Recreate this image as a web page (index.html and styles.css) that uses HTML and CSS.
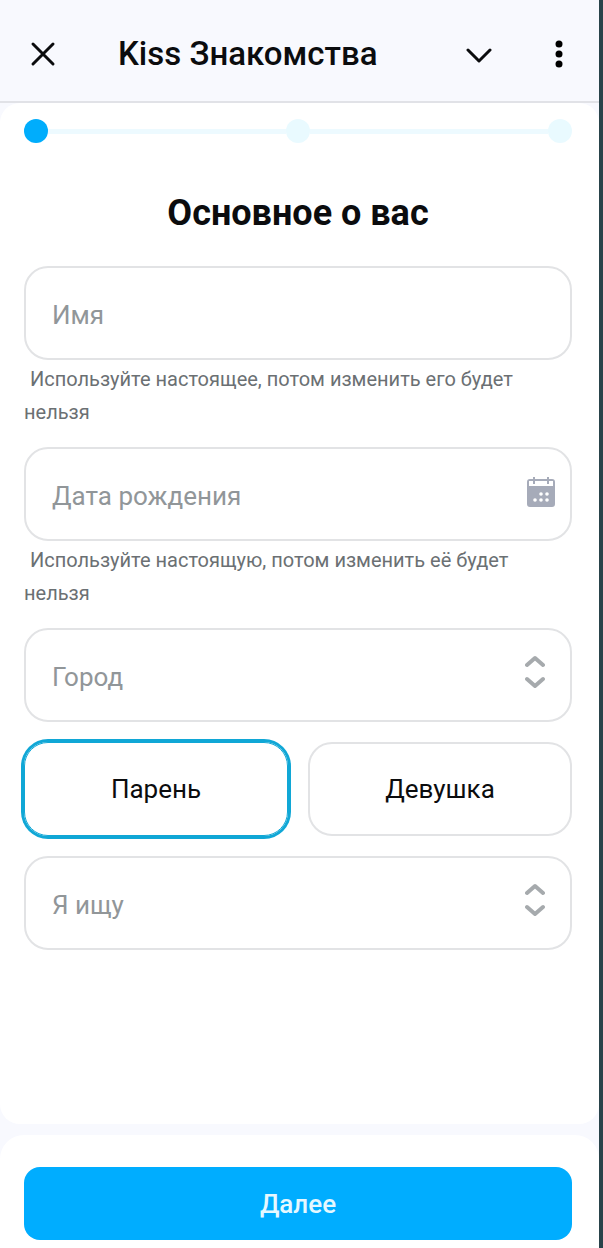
FILE: index.html
```html
<!DOCTYPE html>
<html lang="ru">
<head>
    <meta charset="UTF-8">
    <meta name="viewport" content="width=device-width, initial-scale=1">
    <title>Kiss Знакомства</title>
    <link rel="stylesheet" href="styles.css">
</head>
<body>

<header class="header">
    <button class="icon-btn" type="button" aria-label="Закрыть">
        <svg width="28" height="28" viewBox="0 0 28 28"><path d="M4 4L24 24M24 4L4 24"/></svg>
    </button>
    <h1>Kiss Знакомства</h1>
    <button class="icon-btn" type="button" aria-label="Свернуть">
        <svg width="28" height="28" viewBox="0 0 28 28"><path d="M2 10L13 21L24 10"/></svg>
    </button>
    <button class="icon-btn more" type="button" aria-label="Меню">
        <svg width="8" height="28" viewBox="0 0 8 28"><circle cx="4" cy="4" r="3.5"/><circle cx="4" cy="14" r="3.5"/><circle cx="4" cy="24" r="3.5"/></svg>
    </button>
</header>

<main class="content">
    <div class="steps">
        <span class="dot on"></span>
        <span class="line"></span>
        <span class="dot"></span>
        <span class="line"></span>
        <span class="dot"></span>
    </div>

    <h2>Основное о вас</h2>

    <form class="form" id="profile">
        <div class="field">
            <div class="box">
                <input class="control" type="text" placeholder="Имя" aria-label="Имя" aria-describedby="name-hint">
            </div>
            <p class="hint" id="name-hint">Используйте настоящее, потом изменить его будет нельзя</p>
        </div>

        <div class="field">
            <div class="box">
                <input class="control" type="text" placeholder="Дата рождения" aria-label="Дата рождения" aria-describedby="date-hint">
                <svg class="calendar" width="28" height="32" viewBox="0 0 28 32">
                    <path fill-rule="evenodd" d="M3 3H25Q28 3 28 6V28Q28 31 25 31H3Q0 31 0 28V6Q0 3 3 3ZM2 5V10H26V5Z"/>
                    <path d="M6 1H8V8H6ZM20 1H22V8H20Z"/>
                    <g fill="#fff">
                        <circle cx="14" cy="18" r="1.8"/><circle cx="20" cy="18" r="1.8"/>
                        <circle cx="8" cy="24" r="1.8"/><circle cx="14" cy="24" r="1.8"/><circle cx="20" cy="24" r="1.8"/>
                    </g>
                </svg>
            </div>
            <p class="hint" id="date-hint">Используйте настоящую, потом изменить её будет нельзя</p>
        </div>

        <div class="box">
            <select class="control" aria-label="Город">
                <option>Город</option>
            </select>
            <svg class="arrows" width="20" height="34" viewBox="0 0 20 34"><path d="M2 10L10 3L18 10M2 24L10 31L18 24"/></svg>
        </div>

        <div class="gender">
            <label>
                <input type="radio" name="gender" checked>
                <span>Парень</span>
            </label>
            <label>
                <input type="radio" name="gender">
                <span>Девушка</span>
            </label>
        </div>

        <div class="box">
            <select class="control" aria-label="Я ищу">
                <option>Я ищу</option>
            </select>
            <svg class="arrows" width="20" height="34" viewBox="0 0 20 34"><path d="M2 10L10 3L18 10M2 24L10 31L18 24"/></svg>
        </div>
    </form>
</main>

<footer class="footer">
    <button class="next" type="submit" form="profile">Далее</button>
</footer>

</body>
</html>
```
FILE: styles.css
```css
*{box-sizing: border-box;}
body,h1,h2,p{margin: 0;}
button,input,select{font: inherit;}
svg{display: block;}

body{
    display: flex;
    flex-direction: column;
    min-height: 100vh;
    border-right: 4px solid #29434a;
    background: #f8f9fe;
    color: #0b0c0e;
    font-family: Roboto, "Liberation Sans", sans-serif;
    font-size: 26px;
}

/* header */
.header{
    display: flex;
    align-items: center;
    height: 103px;
    padding: 6px 36px 0 24px;
    border-bottom: 2px solid #e1e2e7;
}
.header h1{
    flex: 1;
    margin-left: 56px;
    font-size: 33px;
    font-weight: 500;
}
.icon-btn{
    padding: 5px;
    border: none;
    background: none;
    cursor: pointer;
}
.icon-btn path{
    fill: none;
    stroke: #0b0c0e;
    stroke-width: 3;
    stroke-linecap: round;
    stroke-linejoin: round;
}
.icon-btn.more{
    margin-left: 56px;
    padding: 0;
}

/* content */
.content{
    flex: 1;
    padding: 16px 27px 0 24px;
    border-radius: 20px;
    background: #fff;
}
.steps{
    display: flex;
    align-items: center;
}
.steps .dot{
    width: 24px;
    height: 24px;
    border-radius: 50%;
    background: #e9faff;
}
.steps .dot.on{
    background: #00adfc;
}
.steps .line{
    flex: 1;
    height: 5px;
    background: #edfaff;
}
.content h2{
    margin: 50px 0 33px;
    font-size: 36px;
    font-weight: 700;
    line-height: 40px;
    text-align: center;
}

/* form */
.form{
    display: flex;
    flex-direction: column;
    gap: 20px;
}
.box{
    position: relative;
}
.control{
    display: block;
    width: 100%;
    height: 94px;
    padding: 4px 72px 0 26px;
    border: 2px solid #e2e3e5;
    border-radius: 24px;
    outline: none;
    background: #fff;
    color: #919699;
    appearance: none;
}
.control::placeholder{
    color: #919699;
    opacity: 1;
}
.calendar{
    position: absolute;
    top: 29px;
    right: 17px;
    fill: #a6abb9;
    pointer-events: none;
}
.arrows{
    position: absolute;
    top: 27px;
    right: 27px;
    fill: none;
    stroke: #a6aaad;
    stroke-width: 4;
    stroke-linecap: round;
    stroke-linejoin: round;
    pointer-events: none;
}
.hint{
    margin: 3px 0 -2px;
    color: #6b7073;
    font-size: 20px;
    line-height: 33px;
    text-indent: 6px;
}
.gender{
    display: flex;
    gap: 20px;
}
.gender label{
    position: relative;
    flex: 1;
    cursor: pointer;
}
.gender input{
    position: absolute;
    opacity: 0;
}
.gender span{
    display: flex;
    align-items: center;
    justify-content: center;
    height: 94px;
    border: 2px solid #e2e3e5;
    border-radius: 24px;
}
/* the ring overlaps the hidden border so it reads as one thick line */
.gender input:checked + span{
    border: 1px solid #10a7d6;
    box-shadow: 0 0 0 3px #10a7d6;
}

/* footer */
.footer{
    margin-top: 11px;
    padding: 32px 27px 8px 24px;
    border-radius: 24px 24px 0 0;
    background: #fff;
}
.next{
    display: block;
    width: 100%;
    height: 73px;
    border: none;
    border-radius: 16px;
    background: #00adff;
    color: #e6f8ff;
    font-weight: 500;
    cursor: pointer;
}
```
